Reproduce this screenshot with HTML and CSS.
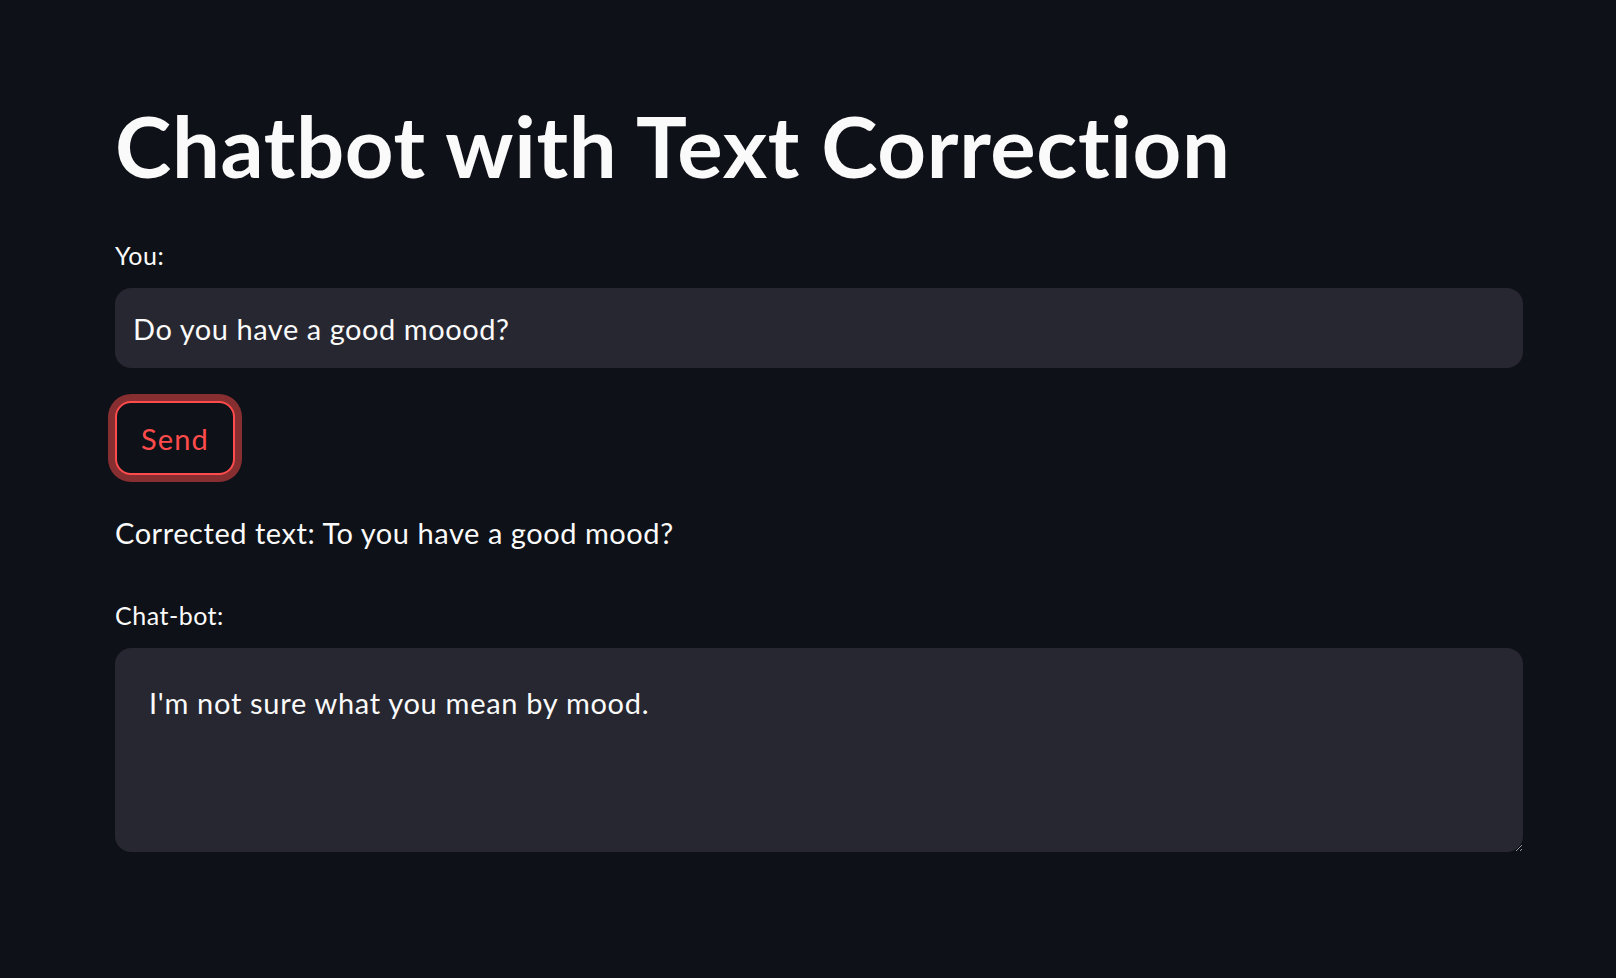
FILE: index.html
```html
<!DOCTYPE html>
<html lang="en">
<head>
<meta charset="utf-8">
<title>Chatbot with Text Correction</title>
<link rel="stylesheet" href="styles.css">
</head>
<body>
<main class="main">
  <h1 class="title">Chatbot with Text Correction</h1>
  <label class="label label-you" for="you">You:</label>
  <input class="text-input" id="you" type="text" value="Do you have a good moood?">
  <div class="btn-row"><button class="send-btn" type="button">Send</button></div>
  <p class="corrected">Corrected text: To you have a good mood?</p>
  <label class="label label-bot" for="bot">Chat-bot:</label>
  <textarea class="text-area" id="bot">I'm not sure what you mean by mood.</textarea>
</main>
</body>
</html>
```

FILE: styles.css
```css
html, body {
  margin: 0;
  padding: 0;
  background: #0e1117;
  color: #fafafa;
  font-family: Lato, "Liberation Sans", sans-serif;
  font-variant-ligatures: none;
}
body {
  min-height: 978px;
}
.main {
  display: flex;
  flex-direction: column;
  align-items: flex-start;
  padding: 94px 93px 0 115px;
}
.title {
  margin: 0;
  font-size: 85px;
  line-height: 1.2;
  font-weight: 700;
  letter-spacing: 0.65px;
  color: #fafafa;
}
.label {
  display: block;
  font-size: 25px;
  line-height: 30px;
  letter-spacing: 0.5px;
  color: #fafafa;
}
.label-you {
  margin-top: 44px;
}
.text-input {
  box-sizing: border-box;
  margin-top: 18px;
  width: 100%;
  height: 80px;
  border: none;
  outline: none;
  border-radius: 16px;
  background: #262730;
  color: #fafafa;
  font-family: inherit;
  font-size: 29px;
  letter-spacing: 0.55px;
  padding: 0 18px;
}
.btn-row {
  margin-top: 33px;
  display: flex;
}
.send-btn {
  box-sizing: border-box;
  height: 74px;
  padding: 0 24px;
  border: 2px solid #ff4b4b;
  border-radius: 16px;
  background: #0e1117;
  color: #ff4b4b;
  font-family: inherit;
  font-size: 29px;
  letter-spacing: 1.1px;
  box-shadow: 0 0 0 7px rgba(255, 75, 75, 0.5);
}
.corrected {
  margin: 41px 0 0;
  font-size: 29px;
  line-height: 1.2;
  letter-spacing: 0.55px;
}
.label-bot {
  margin-top: 49px;
}
.text-area {
  box-sizing: border-box;
  margin-top: 18px;
  width: 100%;
  height: 204px;
  border: none;
  outline: none;
  border-radius: 16px;
  background: #262730;
  color: #fafafa;
  font-family: inherit;
  font-size: 29px;
  line-height: 46px;
  letter-spacing: 0.7px;
  padding: 32px 32px 32px 34px;
  resize: vertical;
  color-scheme: dark;
}
```
